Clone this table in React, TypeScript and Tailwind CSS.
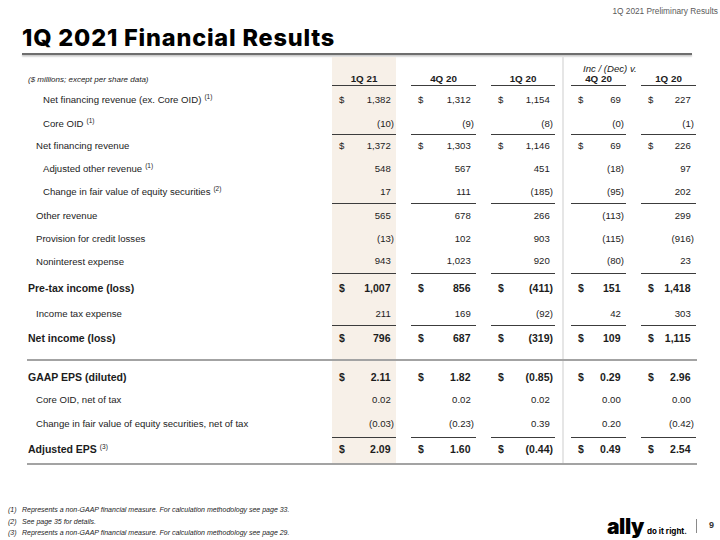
import React from 'react';

type Row = {
  label: string;
  sup?: string;
  lvl: 0 | 1 | 2;
  bold?: boolean;
  dollar?: boolean;
  line?: boolean;
  h: string;
  v: string[];
};

const COL_W = ['w-[64px]', 'w-[65px]', 'w-[64px]', 'w-[55px]', 'w-[55px]'];
const INDENT = ['pl-[28px]', 'pl-[36px]', 'pl-[43px]'];

const incomeRows: Row[] = [
  { label: 'Net financing revenue (ex. Core OID)', sup: '(1)', lvl: 2, dollar: true, h: 'h-[29px]', v: ['1,382', '1,312', '1,154', '69', '227'] },
  { label: 'Core OID', sup: '(1)', lvl: 2, line: true, h: 'h-[20px]', v: ['(10)', '(9)', '(8)', '(0)', '(1)'] },
  { label: 'Net financing revenue', lvl: 1, dollar: true, h: 'h-[23px]', v: ['1,372', '1,303', '1,146', '69', '226'] },
  { label: 'Adjusted other revenue', sup: '(1)', lvl: 2, h: 'h-[23px]', v: ['548', '567', '451', '(18)', '97'] },
  { label: 'Change in fair value of equity securities', sup: '(2)', lvl: 2, line: true, h: 'h-[23.5px]', v: ['17', '111', '(185)', '(95)', '202'] },
  { label: 'Other revenue', lvl: 1, h: 'h-[24px]', v: ['565', '678', '266', '(113)', '299'] },
  { label: 'Provision for credit losses', lvl: 1, h: 'h-[22px]', v: ['(13)', '102', '903', '(115)', '(916)'] },
  { label: 'Noninterest expense', lvl: 1, line: true, h: 'h-[24px]', v: ['943', '1,023', '920', '(80)', '23'] },
  { label: 'Pre-tax income (loss)', lvl: 0, bold: true, dollar: true, h: 'h-[29px]', v: ['1,007', '856', '(411)', '151', '1,418'] },
  { label: 'Income tax expense', lvl: 1, line: true, h: 'h-[22.5px]', v: ['211', '169', '(92)', '42', '303'] },
  { label: 'Net income (loss)', lvl: 0, bold: true, dollar: true, h: 'h-[27px]', v: ['796', '687', '(319)', '109', '1,115'] },
];

const epsRows: Row[] = [
  { label: 'GAAP EPS (diluted)', lvl: 0, bold: true, dollar: true, h: 'h-[24px]', v: ['2.11', '1.82', '(0.85)', '0.29', '2.96'] },
  { label: 'Core OID, net of tax', lvl: 1, h: 'h-[22px]', v: ['0.02', '0.02', '0.02', '0.00', '0.00'] },
  { label: 'Change in fair value of equity securities, net of tax', lvl: 1, line: true, h: 'h-[26px]', v: ['(0.03)', '(0.23)', '0.39', '0.20', '(0.42)'] },
  { label: 'Adjusted EPS', sup: '(3)', lvl: 0, bold: true, dollar: true, h: 'h-[25.5px]', v: ['2.09', '1.60', '(0.44)', '0.49', '2.54'] },
];

const footnotes = [
  'Represents a non-GAAP financial measure. For calculation methodology see page 33.',
  'See page 35 for details.',
  'Represents a non-GAAP financial measure. For calculation methodology see page 29.',
];

// five value slots with the gaps and the vertical rule between 1Q 20 and 4Q 20
const Columns = ({ render }: { render: (i: number) => React.ReactNode }) => (
  <>
    {render(0)}
    <div className="w-[15px]" />
    {render(1)}
    <div className="w-[15px]" />
    {render(2)}
    <div className="flex w-[16px] justify-center">
      <div className="h-full w-[1.5px] bg-[#e6e6e6]" />
    </div>
    {render(3)}
    <div className="w-[15px]" />
    {render(4)}
  </>
);

const cellBase = (i: number, line?: boolean) =>
  `${COL_W[i]} ${i === 0 ? 'bg-[#f7f0e8]' : ''} ${line ? 'border-b-[1.5px] border-[#3c3c3c]' : ''}`;

const DataRow = ({ row }: { row: Row }) => (
  <div className={`flex ${row.h}`}>
    <div
      className={`flex w-[332px] items-center ${INDENT[row.lvl]} ${
        row.bold ? 'text-[10.5px] font-bold' : 'text-[9.6px]'
      }`}
    >
      <span>{row.label}</span>
      {row.sup ? <sup className="ml-[3px] text-[6.5px] font-normal">{row.sup}</sup> : null}
    </div>
    <Columns
      render={(i) => {
        const val = row.v[i];
        const neg = val.endsWith(')');
        return (
          <div
            className={`flex items-center justify-between pl-[7px] pr-[2px] ${cellBase(i, row.line)} ${
              row.bold ? 'text-[10.5px] font-bold' : 'text-[9.6px]'
            }`}
          >
            <span>{row.dollar ? '$' : ''}</span>
            <span>
              {val}
              {neg ? null : <span className="invisible">)</span>}
            </span>
          </div>
        );
      }}
    />
  </div>
);

const Spacer = ({ h }: { h: string }) => (
  <div className={`flex ${h}`}>
    <div className="w-[332px]" />
    <Columns render={(i) => <div className={cellBase(i)} />} />
  </div>
);

const FullRule = () => <div className="ml-[27px] h-[1.5px] w-[670px] bg-[#a3a3a3]" />;

export default function App() {
  return (
    <div
      className="flex h-[540px] w-[720px] flex-col overflow-hidden bg-white text-[#1c1c1c]"
      style={{ fontFamily: '"Liberation Sans", Arial, sans-serif' }}
    >
      <div className="flex justify-end pr-[2px] pt-[6px] text-[8.3px] leading-[10px] text-[#5a5a5a]">
        1Q 2021 Preliminary Results
      </div>

      <h1
        className="ml-[22px] mt-[7.5px] text-[23.5px] font-extrabold leading-[28px] tracking-[0.8px] text-black"
        style={{ fontFamily: 'Inter, "Open Sans", sans-serif' }}
      >
        1Q 2021 Financial Results
      </h1>
      <div className="ml-[22px] mt-[1.5px] h-[2px] w-[670px] bg-[#6e6e6e] shadow-[0_1.5px_1.5px_rgba(0,0,0,0.25)]" />

      <div className="mt-[2px] flex flex-col">
        {/* Inc / (Dec) caption */}
        <div className="flex h-[17px]">
          <div className="w-[332px]" />
          <Columns
            render={(i) =>
              i === 3 ? (
                <div className={`${COL_W[3]} relative`}>
                  <span className="absolute bottom-0 left-[12px] whitespace-nowrap text-[9.6px] italic leading-[11px]">
                    Inc / (Dec) v.
                  </span>
                </div>
              ) : (
                <div className={cellBase(i)} />
              )
            }
          />
        </div>

        {/* column headers */}
        <div className="flex h-[11.5px]">
          <div className="flex w-[332px] items-center pl-[28px] text-[8px] italic">
            ($ millions; except per share data)
          </div>
          <Columns
            render={(i) => (
              <div
                className={`flex items-center justify-center text-[9.8px] font-bold leading-none ${cellBase(i, true)}`}
              >
                {['1Q 21', '4Q 20', '1Q 20', '4Q 20', '1Q 20'][i]}
              </div>
            )}
          />
        </div>

        {incomeRows.map((r) => (
          <DataRow key={r.label} row={r} />
        ))}

        <Spacer h="h-[6.5px]" />
        <FullRule />
        <Spacer h="h-[5px]" />

        {epsRows.map((r) => (
          <DataRow key={r.label} row={r} />
        ))}

        <FullRule />
      </div>

      <div className="mt-auto flex items-end justify-between pb-[1.5px]">
        <div className="flex flex-col pl-[8px] text-[7px] italic leading-[11.5px]">
          {footnotes.map((f, i) => (
            <div key={i} className="flex">
              <span className="w-[14px]">({i + 1})</span>
              <span>{f}</span>
            </div>
          ))}
        </div>
        <div className="flex items-center pb-[2px] pr-[6px]">
          <div className="flex items-baseline" style={{ fontFamily: 'Inter, "Open Sans", sans-serif' }}>
            <span className="text-[21px] font-black leading-none tracking-[-0.4px] text-black">ally</span>
            <span className="ml-[3px] text-[8px] font-bold leading-none text-black">do it right.</span>
          </div>
          <div className="ml-[9px] h-[14px] w-[1px] bg-[#8a8a8a]" />
          <span className="ml-[12px] text-[9px] font-bold text-[#333]">9</span>
        </div>
      </div>
    </div>
  );
}
